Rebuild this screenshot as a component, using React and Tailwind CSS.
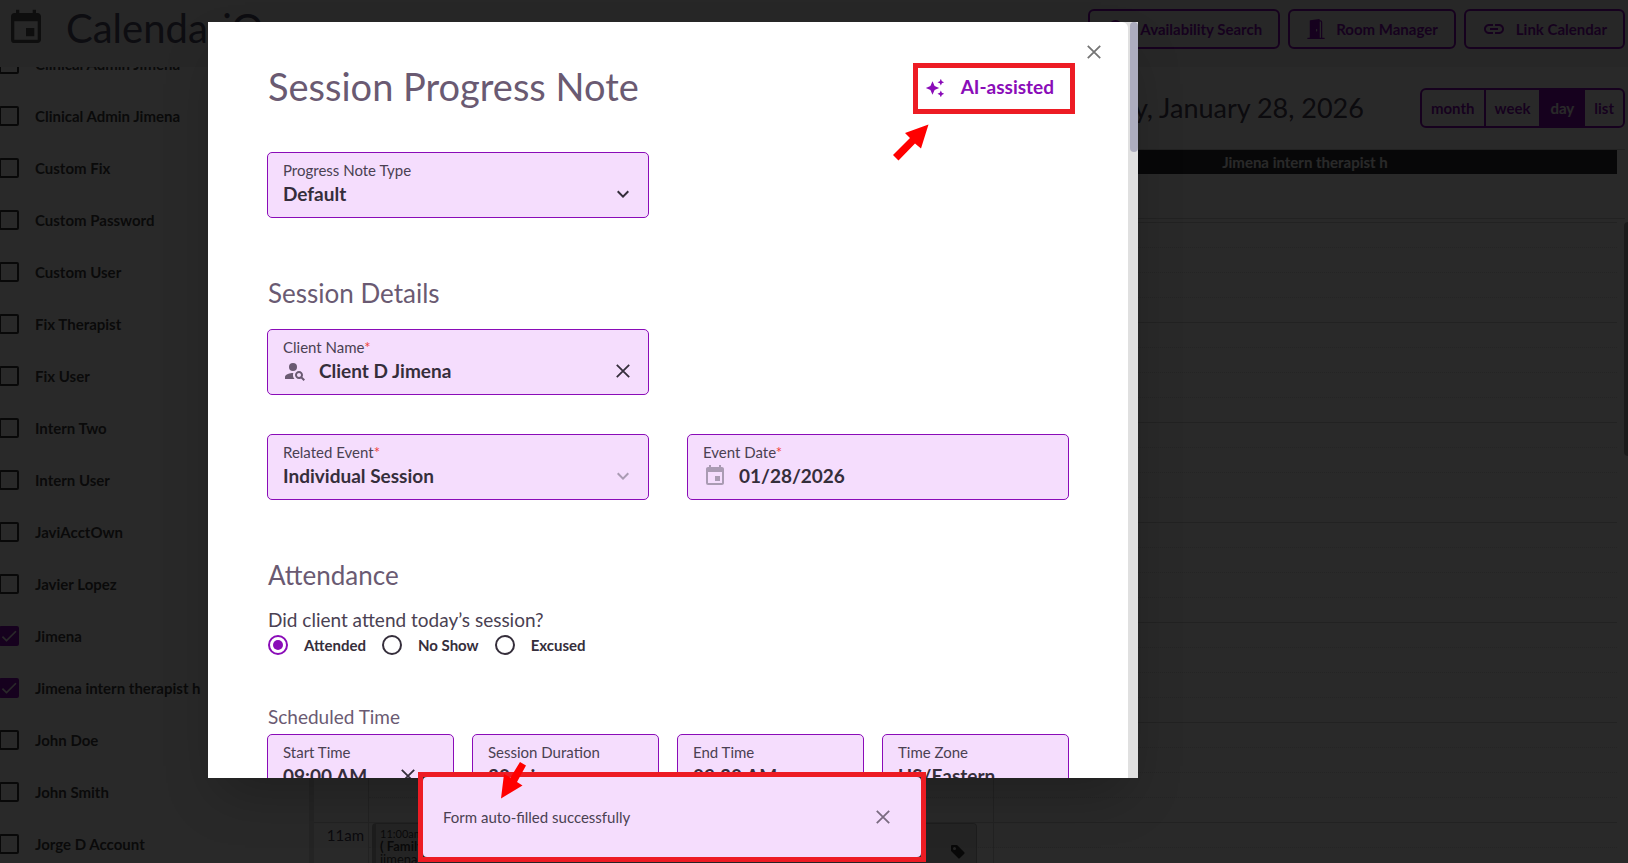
import React, { useState } from "react";
import {
  MdAutoAwesome,
  MdCheck,
  MdEvent,
  MdExpandMore,
  MdLink,
  MdPersonSearch,
  MdSearch,
} from "react-icons/md";
import { BsDoorOpenFill, BsTagFill } from "react-icons/bs";

const members = [
  { name: "Clinical Admin Jimena", id: "clinical-1" },
  { name: "Clinical Admin Jimena", id: "clinical-2" },
  { name: "Custom Fix", id: "custom-fix" },
  { name: "Custom Password", id: "custom-password" },
  { name: "Custom User", id: "custom-user" },
  { name: "Fix Therapist", id: "fix-therapist" },
  { name: "Fix User", id: "fix-user" },
  { name: "Intern Two", id: "intern-two" },
  { name: "Intern User", id: "intern-user" },
  { name: "JaviAcctOwn", id: "javi" },
  { name: "Javier Lopez", id: "javier" },
  { name: "Jimena", id: "jimena", checked: true },
  { name: "Jimena intern therapist h", id: "jimena-intern", checked: true },
  { name: "John Doe", id: "john-doe" },
  { name: "John Smith", id: "john-smith" },
  { name: "Jorge D Account", id: "jorge" },
];

const headerActions = [
  { label: "Availability Search", icon: MdSearch, size: "size-6" },
  { label: "Room Manager", icon: BsDoorOpenFill, size: "size-5" },
  { label: "Link Calendar", icon: MdLink, size: "size-6" },
];

const hours = ["5am", "6am", "7am", "8am", "9am", "10am", "11am"];

const CloseIcon = ({ className }) => (
  <svg viewBox="0 0 14 14" className={className} aria-hidden="true">
    <path
      d="M0.8 0.8 L13.2 13.2 M13.2 0.8 L0.8 13.2"
      stroke="currentColor"
      strokeWidth="1.8"
      fill="none"
    />
  </svg>
);

const Header = () => (
  <header className="flex h-[67px] shrink-0 items-start justify-between bg-[#f0f0f0] pr-[3px]">
    <div className="flex h-14 items-center gap-5 pl-1.5">
      <MdEvent className="size-10 text-[#5a5a5a]" />
      <h1 className="text-[40px] leading-[48px] text-[#55506a]">CalendariQ</h1>
    </div>
    <div className="flex gap-2 pt-[9px]">
      {headerActions.map(({ label, icon: Icon, size }) => (
        <button
          key={label}
          type="button"
          className="flex h-10 items-center gap-2.5 rounded-md border-2 border-[#8a0cb8] px-4 text-[15px] font-bold text-[#8a0cb8]"
        >
          <Icon className={size} />
          {label}
        </button>
      ))}
    </div>
  </header>
);

const Sidebar = () => (
  <aside className="w-[309px] shrink-0 overflow-hidden">
    <ul className="-mt-[29px]">
      {members.map((member) => (
        <li key={member.id} className="h-[52px]">
          <label className="-ml-px flex h-full items-center text-[15px] font-bold text-[#3f3f3f]">
            <input
              type="checkbox"
              defaultChecked={member.checked}
              className="peer size-5 shrink-0 appearance-none rounded-xs border-2 border-[#333] checked:border-[#8a0cb8] checked:bg-[#8a0cb8]"
            />
            <MdCheck className="invisible -ml-5 size-5 text-white peer-checked:visible" />
            <span className="ml-4">{member.name}</span>
          </label>
        </li>
      ))}
    </ul>
  </aside>
);

const Calendar = () => {
  const views = ["month", "week", "day", "list"];
  const [view, setView] = useState("day");

  return (
    <main className="flex min-w-0 flex-1 flex-col overflow-hidden border-l-[5px] border-[#dcdcdc]">
      <div className="flex h-[82px] shrink-0 items-center justify-end gap-14 pr-[3px]">
        <h2 className="text-[27px] leading-8 text-[#4a4458]">
          Wednesday, January 28, 2026
        </h2>
        <div className="flex h-10 overflow-hidden rounded-md border-2 border-[#8a0cb8]">
          {views.map((item) => (
            <button
              key={item}
              type="button"
              onClick={() => setView(item)}
              className={`border-l-2 border-[#8a0cb8] px-[9px] text-[15px] font-bold first:border-l-0 ${
                view === item ? "bg-[#8a0cb8] text-white" : "text-[#8a0cb8]"
              }`}
            >
              {item}
            </button>
          ))}
        </div>
      </div>

      <div className="mr-[3px] flex h-[70px] shrink-0 border-t border-b border-[#d4d4d4] pr-2">
        <div className="w-[55px] border-r border-[#d4d4d4]" />
        <div className="grid h-6 flex-1 grid-cols-2 bg-[#2e2e33] text-center text-[15px] leading-6 font-bold text-white">
          <span>Jimena</span>
          <span>Jimena intern therapist h</span>
        </div>
      </div>

      <div className="flex min-h-0 flex-1 overflow-hidden pt-[3px]">
        <div className="min-w-0 flex-1">
          {hours.map((hour) => (
            <div key={hour} className="flex h-[100px] border-t border-[#d4d4d4]">
              <div className="w-[55px] shrink-0 border-r border-[#d4d4d4] pr-1 text-right text-[15px] leading-6 text-[#4a4458]">
                {hour}
              </div>
              {["first", "second"].map((column) => (
                <div
                  key={column}
                  className="relative flex-1 border-r border-[#d4d4d4] last:border-r-0"
                >
                  <div className="h-[25px] border-b border-dotted border-[#dcdcdc]" />
                  <div className="h-[25px] border-b border-dotted border-[#dcdcdc]" />
                  <div className="h-[25px] border-b border-dotted border-[#dcdcdc]" />
                  {hour === "11am" && column === "first" && (
                    <div className="absolute inset-y-0 right-4 left-[3px] flex justify-between rounded-t border border-[#b5b5b5] border-l-4 bg-[#e0e0e0] pl-1 text-[#3f3f3f]">
                      <div className="pt-[3px] leading-[13px]">
                        <p className="text-[11px]">11:00am</p>
                        <p className="text-[13px] font-bold">
                          ( Family Session )
                        </p>
                        <p className="text-[13px]">jimena</p>
                      </div>
                      <div className="pt-5 pr-2.5">
                        <BsTagFill className="size-4 text-[#333]" />
                      </div>
                    </div>
                  )}
                </div>
              ))}
            </div>
          ))}
        </div>
        <div className="ml-[7px] w-1 shrink-0">
          <div className="h-[234px] rounded-l bg-[#aaaaaa]" />
        </div>
      </div>
    </main>
  );
};

const Field = ({ id, label, required, leading, trailing, children }) => (
  <div className="flex h-[66px] flex-col rounded-[5px] border border-[#8a0cb8] bg-[#f5ddfd] px-[15px] pt-2">
    <label htmlFor={id} className="text-[15px] leading-[18px] text-[#4a4152]">
      {label}
      {required && <span className="text-[#f04438]">*</span>}
    </label>
    <div className="flex h-[30px] items-center">
      {leading}
      {children}
      {trailing}
    </div>
  </div>
);

const valueClass =
  "w-full min-w-0 appearance-none bg-transparent p-0 text-[19px] leading-7 font-bold text-[#352e3b] opacity-100 outline-none";

const SelectField = ({ id, label, value, required, muted }) => (
  <Field
    id={id}
    label={label}
    required={required}
    trailing={
      <MdExpandMore
        className={`pointer-events-none -mr-0.5 size-6 shrink-0 ${muted ? "text-[#aa9bb3]" : "text-[#352e3b]"}`}
      />
    }
  >
    <select id={id} className={valueClass} defaultValue={value}>
      <option>{value}</option>
    </select>
  </Field>
);

const InputField = ({
  id,
  label,
  value,
  required,
  leading,
  clearable,
  clearClass = "",
}) => (
  <Field
    id={id}
    label={label}
    required={required}
    leading={leading}
    trailing={
      clearable && (
        <button
          type="button"
          aria-label={`Clear ${label}`}
          className={`flex size-5 shrink-0 items-center justify-center text-[#352e3b] ${clearClass}`}
        >
          <CloseIcon className="size-3.5" />
        </button>
      )
    }
  >
    <input id={id} type="text" className={valueClass} defaultValue={value} />
  </Field>
);

const AttendanceOptions = () => (
  <fieldset>
    <legend className="text-[19px] leading-6 text-[#4a4152]">
      Did client attend today’s session?
    </legend>
    <div className="flex gap-4 pt-px">
      {["Attended", "No Show", "Excused"].map((option) => (
        <label
          key={option}
          className="flex items-center gap-4 text-[15px] leading-6 font-bold text-[#352e3b]"
        >
          <input
            type="radio"
            name="attendance"
            defaultChecked={option === "Attended"}
            className="size-5 appearance-none rounded-full border-2 border-[#352e3b] bg-clip-content p-[3px] checked:border-[#8a0cb8] checked:bg-[#8a0cb8]"
          />
          {option}
        </label>
      ))}
    </div>
  </fieldset>
);

const ProgressNoteModal = () => (
  <section
    role="dialog"
    aria-labelledby="note-title"
    className="flex min-w-0 flex-1 overflow-hidden bg-[#e0e0e0] shadow-2xl"
  >
    <div className="min-w-0 flex-1 overflow-hidden rounded-tr-md bg-white">
      <div className="flex h-[41px] items-end justify-end pr-[27px]">
        <button type="button" aria-label="Close" className="text-[#757575]">
          <CloseIcon className="mb-1 size-3.5" />
        </button>
      </div>

      <div className="px-[59px]">
        <div className="-mr-1.5 flex items-start justify-between">
          <h2
            id="note-title"
            className="pl-px text-[38px] leading-[46px] text-[#6a5a72]"
          >
            Session Progress Note
          </h2>
          <div className="relative">
            <button
              type="button"
              className="flex h-[51px] items-center gap-4 border-[5px] border-[#ed1c24] pr-4 pb-0.5 pl-[7px] text-[19px] font-bold text-[#8a0cb8]"
            >
              <MdAutoAwesome className="size-5" />
              AI-assisted
            </button>
            <svg
              viewBox="0 0 36 37"
              className="absolute top-[61px] -left-5 h-[37px] w-9"
              aria-hidden="true"
            >
              <path
                d="M35.5 0.5 L12 9 L17 14 L0 31 L5.5 36.5 L22 19.5 L28 24.5 Z"
                fill="#ff0000"
              />
            </svg>
          </div>
        </div>

        <div className="mt-[38px] grid grid-cols-2 gap-x-[38px]">
          <SelectField
            id="note-type"
            label="Progress Note Type"
            value="Default"
          />
        </div>

        <h3 className="mt-[59px] pl-px text-[26px] leading-8 text-[#6a5a72]">
          Session Details
        </h3>
        <div className="mt-5 grid grid-cols-2 gap-x-[38px] gap-y-[39px]">
          <InputField
            id="client-name"
            label="Client Name"
            value="Client D Jimena"
            required
            clearable
            leading={
              <MdPersonSearch className="mr-3 size-6 shrink-0 text-[#6a5a72]" />
            }
          />
          <div />
          <SelectField
            id="related-event"
            label="Related Event"
            value="Individual Session"
            required
            muted
          />
          <InputField
            id="event-date"
            label="Event Date"
            value="01/28/2026"
            required
            leading={
              <MdEvent className="mr-3 size-6 shrink-0 text-[#aa9bb3]" />
            }
          />
        </div>

        <h3 className="mt-[59px] mb-[17px] pl-px text-[26px] leading-8 text-[#6a5a72]">
          Attendance
        </h3>
        <div className="pl-px">
          <AttendanceOptions />
        </div>

        <h4 className="mt-12 pl-px text-[19px] leading-6 text-[#6a5a72]">
          Scheduled Time
        </h4>
        <div className="mt-[5px] grid grid-cols-4 gap-[18px]">
          <InputField
            id="start-time"
            label="Start Time"
            value="09:00 AM"
            clearable
            clearClass="mr-5"
          />
          <InputField id="duration" label="Session Duration" value="30 min" />
          <InputField id="end-time" label="End Time" value="09:30 AM" />
          <InputField id="time-zone" label="Time Zone" value="US/Eastern" />
        </div>
      </div>
    </div>
    <div className="w-2.5 shrink-0 pl-0.5">
      <div className="h-[130px] rounded-full bg-[#adadbf]" />
    </div>
  </section>
);

const Toast = () => (
  <div className="absolute bottom-px left-[418px] w-[508px] border-[5px] border-[#ed1c24] bg-[#292929]">
    <div
      role="status"
      className="flex h-20 items-center justify-between rounded bg-[#f5ddfd] pr-[31px] pl-5 text-[15px] text-[#4a4152]"
    >
      Form auto-filled successfully
      <button type="button" aria-label="Dismiss" className="text-[#7a6b80]">
        <CloseIcon className="size-3.5" />
      </button>
    </div>
    <svg
      viewBox="0 0 26 37"
      className="absolute -top-[15px] left-[78px] h-[37px] w-[26px]"
      aria-hidden="true"
    >
      <path
        d="M19 0 L25 3.5 L16 20 L21.5 23.5 L0 36.5 L3 12 L9.5 15.5 Z"
        fill="#ff0000"
      />
    </svg>
  </div>
);

const App = () => (
  <div className="relative flex h-screen flex-col overflow-hidden bg-white font-['Lato',sans-serif]">
    <Header />
    <div className="flex min-h-0 flex-1">
      <Sidebar />
      <Calendar />
    </div>

    {/* Backdrop */}
    <div className="absolute inset-0 flex bg-black/84 pt-[22px] pr-[490px] pb-[85px] pl-52">
      <ProgressNoteModal />
    </div>
    <Toast />
  </div>
);

export default App;
